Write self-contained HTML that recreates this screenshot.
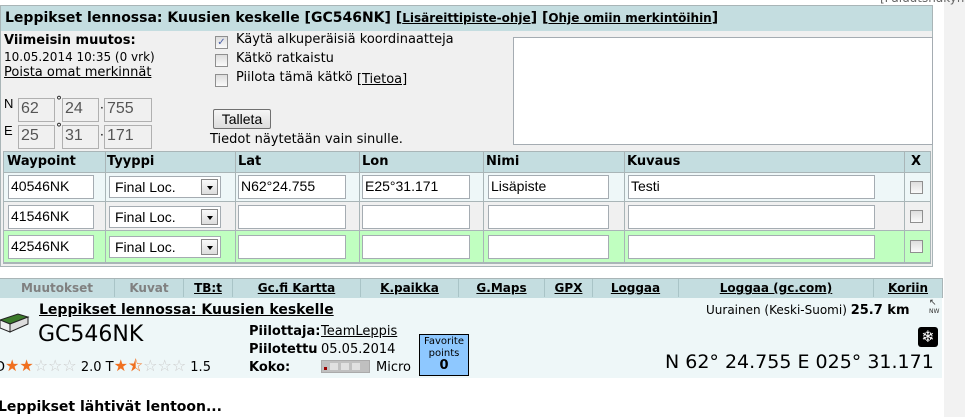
<!DOCTYPE html>
<html><head><meta charset="utf-8"><style>
*{box-sizing:border-box}
body{margin:0;width:965px;height:417px;overflow:hidden;background:#fff;font-family:"DejaVu Sans",Verdana,sans-serif;font-size:12px;color:#000;position:relative}
.a{position:absolute;white-space:nowrap}
a{color:#000}
.inp{position:absolute;background:#fff;border:1px solid #a5acb2;font-family:"Liberation Sans",Arial,sans-serif;font-size:14px;padding:1px 2px;line-height:18px;height:22px}
.ro{background:#f0f0f0;color:#555;border:1px solid #b0b0b0;font-size:16px}
.cb{position:absolute;width:13px;height:13px;border:1px solid #8f8f8f;background:linear-gradient(#ddd,#fafafa)}
.sel{position:absolute;height:22px;background:#fff;border:1px solid #a5acb2;font-family:"Liberation Sans",Arial,sans-serif;font-size:14px;line-height:20px;padding-left:5px}
.sel i{position:absolute;right:2px;top:2px;width:17px;height:16px;border:1px solid #888;background:linear-gradient(#fafafa,#ddd)}
.sel i:after{content:"";position:absolute;left:5px;top:6px;border-left:3px solid transparent;border-right:3px solid transparent;border-top:4px solid #000}
.tab{position:absolute;top:279px;height:18px;text-align:center;font-weight:bold;font-size:12px;line-height:18px;border-right:1px solid #a9c4c7}
.tab a{text-decoration:underline}
</style></head><body>
<div style="position:absolute;left:944px;top:0;width:21px;height:417px;background:#f2f2f2"></div>
<div class="a" style="left:880px;top:-9px;color:#666;font-size:12px">[Paluutsnäkymä]</div>
<div style="position:absolute;left:0;top:5px;width:933px;height:262px;background:#f0f0f0;border:1px solid #a9b5b7"></div>
<div style="position:absolute;left:1px;top:6px;width:931px;height:25px;background:#c4dde0"></div>
<div class="a" style="left:5px;top:10px;font-size:14px;font-weight:bold">Leppikset lennossa: Kuusien keskelle [GC546NK] [<a href="#" style="font-size:12px">Lisäreittipiste-ohje</a>] [<a href="#" style="font-size:12px">Ohje omiin merkintöihin</a>]</div>
<div class="a" style="left:4px;top:33px;font-weight:bold;font-size:13px">Viimeisin muutos:</div>
<div class="a" style="left:4px;top:50px;font-size:12px">10.05.2014 10:35 (0 vrk)</div>
<div class="a" style="left:4px;top:65px;font-size:13px"><a href="#">Poista omat merkinnät</a></div>
<div class="a" style="left:4px;top:96px;font-size:13px;font-family:'Liberation Sans',Arial">N</div>
<div class="a" style="left:4px;top:123px;font-size:13px;font-family:'Liberation Sans',Arial">E</div>
<div class="inp ro" style="left:18px;top:98px;width:37px;height:24px">62</div>
<div class="a" style="left:56px;top:94px;font-size:12px">°</div>
<div class="inp ro" style="left:62px;top:98px;width:37px;height:24px">24</div>
<div class="a" style="left:100px;top:101px">·</div>
<div class="inp ro" style="left:104px;top:98px;width:48px;height:24px">755</div>
<div class="inp ro" style="left:18px;top:125px;width:37px;height:24px">25</div>
<div class="a" style="left:56px;top:121px;font-size:12px">°</div>
<div class="inp ro" style="left:62px;top:125px;width:37px;height:24px">31</div>
<div class="a" style="left:100px;top:128px">·</div>
<div class="inp ro" style="left:104px;top:125px;width:48px;height:24px">171</div>
<div class="cb" style="left:215px;top:36px;font-size:10px;line-height:11px;color:#4a5fa8;text-align:center">✓</div>
<div class="cb" style="left:215px;top:54px"></div>
<div class="cb" style="left:215px;top:74px"></div>
<div class="a" style="left:236px;top:32px;font-size:13px">Käytä alkuperäisiä koordinaatteja</div>
<div class="a" style="left:236px;top:51px;font-size:13px">Kätkö ratkaistu</div>
<div class="a" style="left:236px;top:70px;font-size:13px">Piilota tämä kätkö <a href="#" style="font-size:13px;position:relative;top:2px">[Tietoa]</a></div>
<div style="position:absolute;left:213px;top:109px;width:58px;height:20px;border:1px solid #707070;border-radius:2px;background:linear-gradient(#f6f6f6,#dcdcdc);font-family:'Liberation Sans',Arial;font-size:14px;text-align:center;line-height:18px">Talleta</div>
<div class="a" style="left:210px;top:132px;font-size:13px">Tiedot näytetään vain sinulle.</div>
<div style="position:absolute;left:513px;top:37px;width:420px;height:108px;background:#fff;border:1px solid #a5acb2"></div>
<div style="position:absolute;left:3px;top:151px;width:928px;height:113px;border:1px solid #a9b5b7;background:#a9b5b7"></div>
<div style="position:absolute;left:4px;top:152px;width:926px;height:20px;background:#c4dde0"></div>
<div style="position:absolute;left:4px;top:173px;width:926px;height:28px;background:#eef7f8"></div>
<div style="position:absolute;left:4px;top:202px;width:926px;height:28px;background:#f0f0f0"></div>
<div style="position:absolute;left:4px;top:231px;width:926px;height:31px;background:#c0ffc0"></div>
<div style="position:absolute;left:105px;top:152px;width:1px;height:110px;background:#a9b5b7"></div>
<div style="position:absolute;left:235px;top:152px;width:1px;height:110px;background:#a9b5b7"></div>
<div style="position:absolute;left:359px;top:152px;width:1px;height:110px;background:#a9b5b7"></div>
<div style="position:absolute;left:483px;top:152px;width:1px;height:110px;background:#a9b5b7"></div>
<div style="position:absolute;left:624px;top:152px;width:1px;height:110px;background:#a9b5b7"></div>
<div style="position:absolute;left:904px;top:152px;width:1px;height:110px;background:#a9b5b7"></div>
<div class="a" style="left:7px;top:154px;font-weight:bold;font-size:13px">Waypoint</div>
<div class="a" style="left:107px;top:154px;font-weight:bold;font-size:13px">Tyyppi</div>
<div class="a" style="left:238px;top:154px;font-weight:bold;font-size:13px">Lat</div>
<div class="a" style="left:362px;top:154px;font-weight:bold;font-size:13px">Lon</div>
<div class="a" style="left:486px;top:154px;font-weight:bold;font-size:13px">Nimi</div>
<div class="a" style="left:627px;top:154px;font-weight:bold;font-size:13px">Kuvaus</div>
<div class="a" style="left:911px;top:154px;font-weight:bold;font-size:13px">X</div>

<div class="inp" style="left:8px;top:175px;width:86px;height:24px">40546NK</div>
<div class="sel" style="left:109px;top:176px;width:112px">Final Loc.<i></i></div>
<div class="inp" style="left:238px;top:175px;width:108px;height:24px">N62°24.755</div>
<div class="inp" style="left:362px;top:175px;width:108px;height:24px">E25°31.171</div>
<div class="inp" style="left:488px;top:175px;width:121px;height:24px">Lisäpiste</div>
<div class="inp" style="left:628px;top:175px;width:247px;height:24px">Testi</div>
<div class="cb" style="left:910px;top:181px"></div>

<div class="inp" style="left:8px;top:205px;width:86px;height:24px">41546NK</div>
<div class="sel" style="left:109px;top:206px;width:112px">Final Loc.<i></i></div>
<div class="inp" style="left:238px;top:205px;width:108px;height:24px"></div>
<div class="inp" style="left:362px;top:205px;width:108px;height:24px"></div>
<div class="inp" style="left:488px;top:205px;width:121px;height:24px"></div>
<div class="inp" style="left:628px;top:205px;width:247px;height:24px"></div>
<div class="cb" style="left:910px;top:210px"></div>

<div class="inp" style="left:8px;top:235px;width:86px;height:24px">42546NK</div>
<div class="sel" style="left:109px;top:236px;width:112px">Final Loc.<i></i></div>
<div class="inp" style="left:238px;top:235px;width:108px;height:24px"></div>
<div class="inp" style="left:362px;top:235px;width:108px;height:24px"></div>
<div class="inp" style="left:488px;top:235px;width:121px;height:24px"></div>
<div class="inp" style="left:628px;top:235px;width:247px;height:24px"></div>
<div class="cb" style="left:910px;top:240px"></div>
<div style="position:absolute;left:0;top:278px;width:943px;height:20px;background:#c4dde0;border-top:1px solid #a9b5b7;border-right:1px solid #a9b5b7"></div>
<div class="tab" style="left:0;width:115px;color:#808080">Muutokset</div>
<div class="tab" style="left:115px;width:69px;color:#808080">Kuvat</div>
<div class="tab" style="left:184px;width:49px"><a href="#">TB:t</a></div>
<div class="tab" style="left:233px;width:128px"><a href="#">Gc.fi Kartta</a></div>
<div class="tab" style="left:361px;width:98px"><a href="#">K.paikka</a></div>
<div class="tab" style="left:459px;width:86px"><a href="#">G.Maps</a></div>
<div class="tab" style="left:545px;width:48px"><a href="#">GPX</a></div>
<div class="tab" style="left:593px;width:86px"><a href="#">Loggaa</a></div>
<div class="tab" style="left:679px;width:195px"><a href="#">Loggaa (gc.com)</a></div>
<div class="tab" style="left:874px;width:68px;border-right:none"><a href="#">Koriin</a></div>
<div style="position:absolute;left:0;top:298px;width:942px;height:80px;background:#eef7f8"></div>
<svg style="position:absolute;left:0;top:312px" width="30" height="22" viewBox="0 0 30 22"><path d="M0 8 L18 2 L28 5 L10 12 Z" fill="#3a7a2a" stroke="#222"/><path d="M10 12 L28 5 L28 12 L10 20 Z" fill="#ddd" stroke="#222"/><path d="M0 8 L10 12 L10 20 L0 16 Z" fill="#eee" stroke="#222"/></svg>
<div class="a" style="left:39px;top:302px;font-weight:bold;font-size:14px"><a href="#">Leppikset lennossa: Kuusien keskelle</a></div>
<div class="a" style="left:38px;top:322px;font-size:22px">GC546NK</div>
<div class="a" style="left:-5px;top:355px;font-size:13px;color:#000">D<span style="color:#f07020;font-size:16px">★★</span><span style="color:#ccc;font-size:16px">☆☆☆</span> 2.0 T<span style="color:#f07020;font-size:16px">★⯪</span><span style="color:#ccc;font-size:16px">☆☆☆</span> 1.5</div>
<div class="a" style="left:249px;top:324px;font-weight:bold;font-size:13px">Piilottaja:</div>
<div class="a" style="left:321px;top:324px;font-size:13px"><a href="#">TeamLeppis</a></div>
<div class="a" style="left:249px;top:342px;font-weight:bold;font-size:13px">Piilotettu</div>
<div class="a" style="left:321px;top:342px;font-size:13px">05.05.2014</div>
<div class="a" style="left:249px;top:360px;font-weight:bold;font-size:13px">Koko:</div>
<div style="position:absolute;left:321px;top:360px;width:49px;height:13px;background:#c0c0c0;border:1px solid #aaa"><div style="position:absolute;left:2px;top:6px;width:3px;height:3px;background:#900"></div><div style="position:absolute;left:8px;top:2px;width:8px;height:7px;background:#e0e0e0"></div><div style="position:absolute;left:19px;top:2px;width:8px;height:7px;background:#e0e0e0"></div><div style="position:absolute;left:30px;top:2px;width:8px;height:7px;background:#e0e0e0"></div></div>
<div class="a" style="left:376px;top:360px;font-size:13px">Micro</div>
<div style="position:absolute;left:419px;top:334px;width:50px;height:42px;background:#8ec8ff;border:1px solid #000;text-align:center;font-size:10px;line-height:12px;padding-top:1px">Favorite<br>points<br><b style="font-size:13px">0</b></div>
<div class="a" style="left:706px;top:303px;font-size:12px">Uurainen (Keski-Suomi) <b style="font-size:13px">25.7 km</b></div>
<div class="a" style="left:929px;top:299px;font-size:9px;line-height:8px;color:#333">↖<br><span style="font-size:6px">NW</span></div>
<div style="position:absolute;left:918px;top:327px;width:20px;height:20px;background:#000;border-radius:3px;color:#fff;font-size:16px;text-align:center;line-height:20px">❄</div>
<div class="a" style="left:665px;top:351px;font-size:19px">N 62° 24.755 E 025° 31.171</div>
<div class="a" style="left:-2px;top:399px;font-weight:bold;font-size:14px">Leppikset lähtivät lentoon...</div>
</body></html>
